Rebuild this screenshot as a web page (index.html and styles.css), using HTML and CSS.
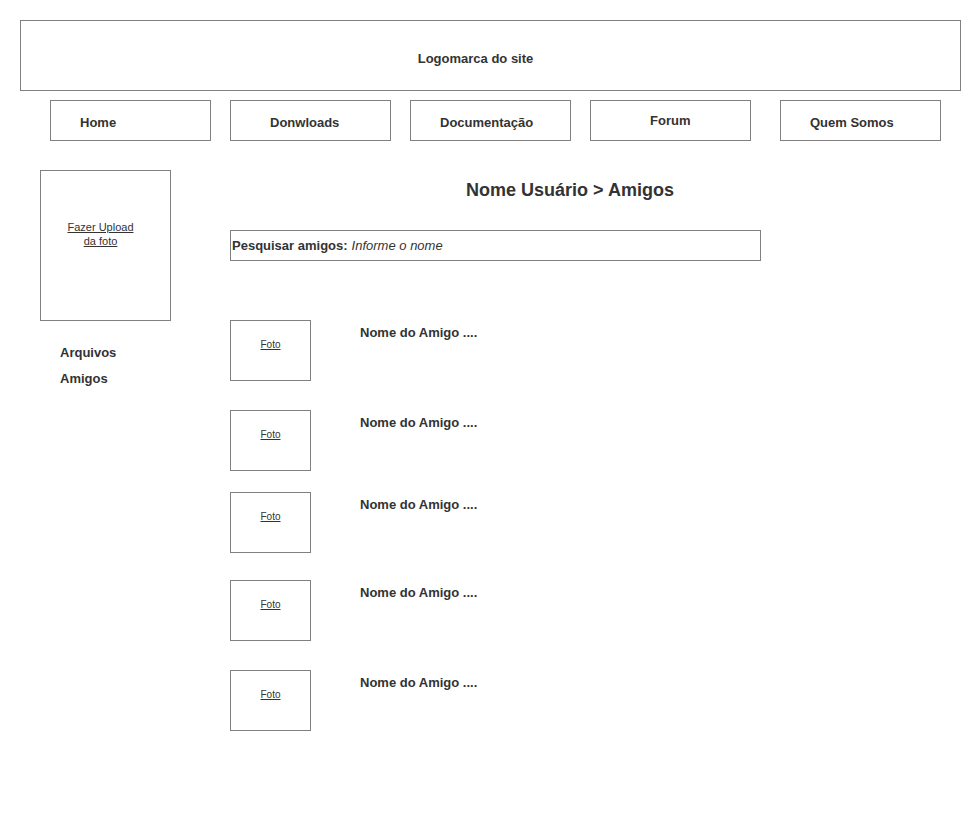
FILE: index.html
```html
<!DOCTYPE html>
<html lang="pt">
<head>
<meta charset="utf-8">
<title>Amigos</title>
<link rel="stylesheet" href="styles.css">
</head>
<body>
<header class="logo">Logomarca do site</header>
<nav class="nav">
  <a class="nav-item nav-home">Home</a>
  <a class="nav-item nav-down">Donwloads</a>
  <a class="nav-item nav-doc">Documentação</a>
  <a class="nav-item nav-forum">Forum</a>
  <a class="nav-item nav-quem">Quem Somos</a>
</nav>
<div class="main">
  <aside class="side">
    <div class="upload"><a class="upload-link">Fazer Upload<br>da foto</a></div>
    <ul class="side-menu">
      <li>Arquivos</li>
      <li>Amigos</li>
    </ul>
  </aside>
  <section class="content">
    <h1 class="title">Nome Usuário &gt; Amigos</h1>
    <div class="search"><b>Pesquisar amigos:</b> <i>Informe o nome</i></div>
    <ul class="friends">
      <li class="friend f1"><div class="photo"><a>Foto</a></div><span class="name">Nome do Amigo ....</span></li>
      <li class="friend f2"><div class="photo"><a>Foto</a></div><span class="name">Nome do Amigo ....</span></li>
      <li class="friend f3"><div class="photo"><a>Foto</a></div><span class="name">Nome do Amigo ....</span></li>
      <li class="friend f4"><div class="photo"><a>Foto</a></div><span class="name">Nome do Amigo ....</span></li>
      <li class="friend f5"><div class="photo"><a>Foto</a></div><span class="name">Nome do Amigo ....</span></li>
    </ul>
  </section>
</div>
</body>
</html>
```
FILE: styles.css
```css
* { box-sizing: border-box; }
body {
  margin: 0;
  background: #fff;
  color: #333;
  font-family: "Liberation Sans", Arial, sans-serif;
  font-size: 13px;
}
.logo {
  margin: 20px 0 0 20px;
  width: 941px;
  height: 71px;
  border: 1px solid #808080;
  display: flex;
  align-items: center;
  justify-content: center;
  font-weight: bold;
  padding-top: 6px;
  padding-right: 30px;
}
.nav {
  display: flex;
  margin-top: 9px;
  padding-left: 50px;
}
.nav-item {
  width: 161px;
  height: 41px;
  border: 1px solid #808080;
  font-weight: bold;
  display: flex;
  align-items: center;
  padding-top: 3px;
  margin-right: 19px;
}
.nav-home { padding-left: 29px; }
.nav-down { padding-left: 39px; }
.nav-doc { padding-left: 29px; }
.nav-forum { padding-left: 59px; padding-top: 0; margin-right: 29px; }
.nav-quem { padding-left: 29px; }
.main {
  display: flex;
  margin-top: 29px;
}
.side {
  width: 230px;
  padding-left: 40px;
}
.upload {
  width: 131px;
  height: 151px;
  border: 1px solid #808080;
  text-align: center;
  padding-top: 49px;
  padding-right: 10px;
  line-height: 14px;
}
.upload-link {
  font-size: 11px;
  text-decoration: underline;
}
.side-menu {
  list-style: none;
  margin: 19px 0 0 20px;
  padding: 0;
  font-weight: bold;
}
.side-menu li { line-height: 26px; }
.content {
  width: 680px;
}
.title {
  margin: 10px 0 0;
  text-align: center;
  font-size: 18px;
  line-height: 21px;
}
.search {
  margin-top: 29px;
  width: 531px;
  height: 31px;
  border: 1px solid #808080;
  display: flex;
  align-items: center;
  padding-left: 1px;
  gap: 4px;
}
.search i { font-size: 13px; }
.friends {
  list-style: none;
  margin: 0;
  padding: 0;
}
.friend {
  display: flex;
  align-items: flex-start;
}
.f1 { margin-top: 59px; }
.f2 { margin-top: 29px; }
.f3 { margin-top: 21px; }
.f4 { margin-top: 27px; }
.f5 { margin-top: 29px; }
.photo {
  width: 81px;
  height: 61px;
  border: 1px solid #808080;
  text-align: center;
  padding-top: 17px;
  line-height: 12px;
}
.photo a {
  font-size: 10px;
  text-decoration: underline;
}
.name {
  margin-left: 49px;
  margin-top: 5px;
  font-weight: bold;
}
```
